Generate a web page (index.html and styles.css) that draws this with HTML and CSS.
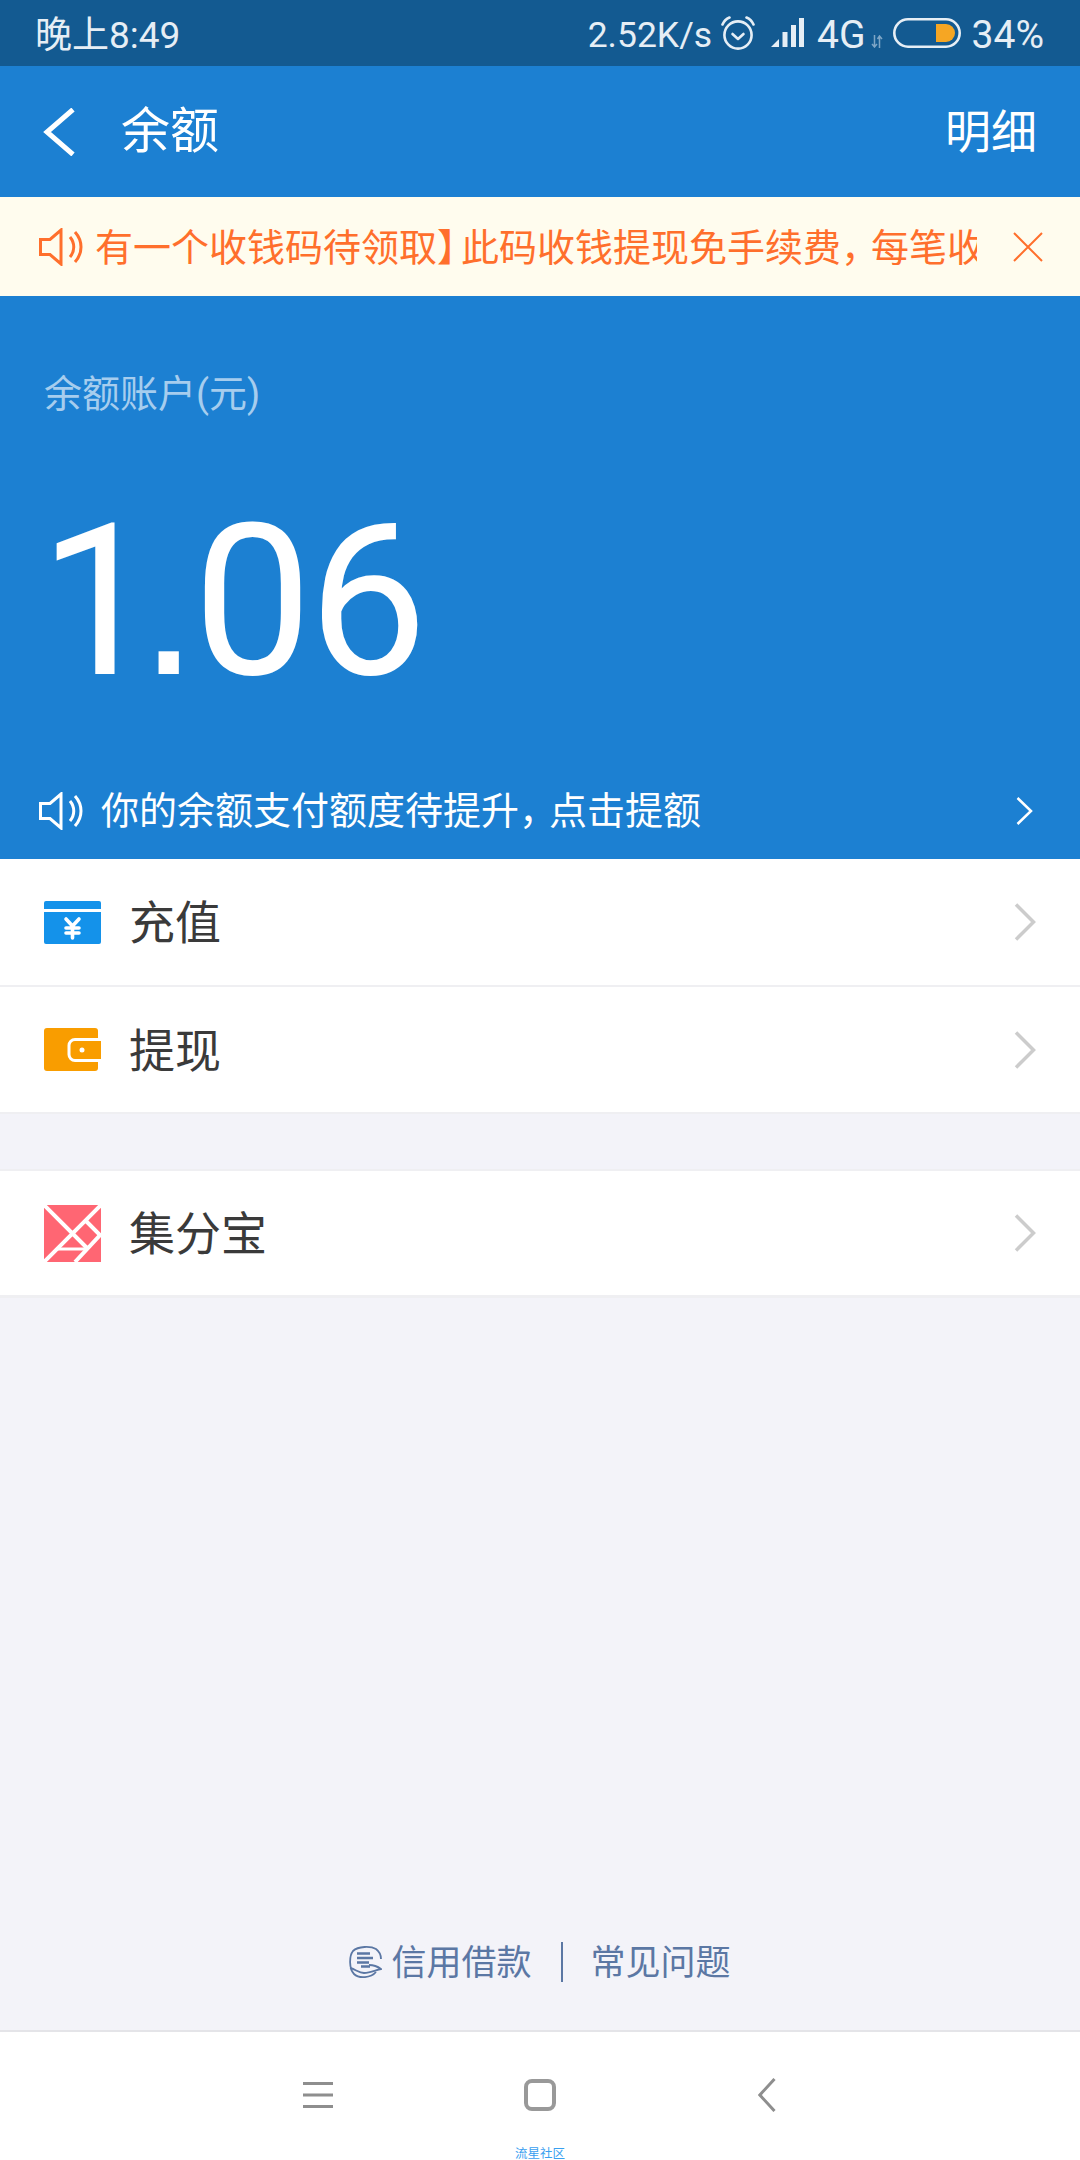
FILE: index.html
```html
<!DOCTYPE html>
<html lang="zh-CN">

<head>
    <meta charset="UTF-8">
    <meta name="viewport" content="width=device-width, initial-scale=1.0">
    <title>余额</title>
    <link rel="stylesheet" href="styles.css">
</head>

<body>
    <div class="page">

        <!-- status bar -->
        <div class="status">
            <span class="status-time">晚上8:49</span>
            <div class="status-right">
                <span class="speed">2.52K/s</span>
                <svg class="alarm" width="34" height="34" viewBox="0 0 34 34" fill="none" stroke="#e6eef5" stroke-width="2.6" stroke-linecap="round" stroke-linejoin="round">
                    <circle cx="17" cy="19" r="13.6" />
                    <path d="M11.5 18l5.5 5 5.500-5" />
                    <path d="M1.500 8.500C3 5 5 3 8.500 1.500" />
                    <path d="M32.500 8.500C31 5 29 3 25.500 1.500" />
                </svg>
                <svg class="signal" width="33" height="30" viewBox="0 0 33 30" fill="#e6eef5">
                    <path d="M0 29L8 21V29Z" />
                    <rect x="11.500" y="14" width="5" height="15" />
                    <rect x="20" y="7" width="5" height="22" />
                    <rect x="28" y="0" width="5" height="29" />
                </svg>
                <span class="net">4G</span>
                <svg class="arrows" width="12" height="13" viewBox="0 0 12 13" fill="none" stroke="#7fa6c6" stroke-width="1.500">
                    <path d="M3.500 0V12M1 9l2.500 3 2.500-3" />
                    <path d="M8.500 13V1M6.500 4l2-3 2.500 3" />
                </svg>
                <svg class="battery" width="68" height="30" viewBox="0 0 68 30">
                    <rect x="1.300" y="1.300" width="65.400" height="27.400" rx="13.700" fill="none" stroke="#e6eef5" stroke-width="2.600" />
                    <path d="M43 6H53A9 9 0 0 1 53 24H43Z" fill="#f6a623" />
                </svg>
                <span class="percent">34%</span>
            </div>
        </div>

        <!-- title bar -->
        <div class="nav">
            <svg class="nav-back" width="32" height="48" viewBox="0 0 32 48" fill="none" stroke="#fff" stroke-width="5">
                <path d="M30 1.500L4 24L30 46.500" />
            </svg>
            <span class="nav-title">余额</span>
            <span class="nav-link">明细</span>
        </div>

        <!-- notice -->
        <div class="notice">
            <svg class="horn" width="44" height="38" viewBox="0 0 44 38" fill="none" stroke="#ff6f2c" stroke-width="3">
                <path d="M1.500 11.500H11L22 2V36L11 26.500H1.500Z" />
                <path d="M31 9C36 15 36 23 31 29" />
                <path d="M36 4C44 13 44 25 36 34" />
            </svg>
            <div class="notice-text">有一个收钱码待领取<span class="bracket">】</span>此码收钱提现免手续费<span class="comma">，</span>每笔收</div>
            <svg class="notice-close" width="30" height="30" viewBox="0 0 30 30" fill="none" stroke="#ff6f2c" stroke-width="2">
                <path d="M1 1L29 29M29 1L1 29" />
            </svg>
        </div>

        <!-- balance -->
        <div class="hero">
            <div class="hero-label">余额账户(元)</div>
            <div class="hero-amount"><span class="hero-one">1</span><span class="hero-dot">.</span>06</div>
            <div class="hero-tip">
                <svg class="horn" width="44" height="38" viewBox="0 0 44 38" fill="none" stroke="#fff" stroke-width="3">
                    <path d="M1.500 11.500H11L22 2V36L11 26.500H1.500Z" />
                    <path d="M31 9C36 15 36 23 31 29" />
                    <path d="M36 4C44 13 44 25 36 34" />
                </svg>
                <span class="hero-tip-text">你的余额支付额度待提升<span class="comma">，</span>点击提额</span>
                <svg class="hero-arrow" width="17" height="28" viewBox="0 0 17 28" fill="none" stroke="#fff" stroke-width="2.500">
                    <path d="M1.500 1L15 14L1.500 27" />
                </svg>
            </div>
        </div>

        <!-- rows -->
        <div class="group">
            <div class="row">
                <svg class="row-icon" width="57" height="43" viewBox="0 0 57 43">
                    <path d="M2 0H55A2 2 0 0 1 57 2V8H0V2A2 2 0 0 1 2 0Z" fill="#1492ea" />
                    <path d="M0 11H57V41A2 2 0 0 1 55 43H2A2 2 0 0 1 0 41Z" fill="#1492ea" />
                    <path d="M22 18L28.500 25L35 18M22 27H35M22 32H35M28.500 25V37" fill="none" stroke="#fff" stroke-width="3.600" stroke-linecap="round" />
                </svg>
                <span class="row-label">充值</span>
                <svg class="row-arrow" width="22" height="38" viewBox="0 0 22 38" fill="none" stroke="#ccc" stroke-width="3.500">
                    <path d="M2 1.500L19.500 19L2 36.500" />
                </svg>
            </div>
            <div class="row row-last">
                <svg class="row-icon" width="57" height="43" viewBox="0 0 57 43">
                    <rect width="54" height="43" rx="3" fill="#f99d00" />
                    <path d="M57 11.500H31A6 6 0 0 0 25 17.500V26.500A6 6 0 0 0 31 32.500H57Z" fill="#f99d00" stroke="#fff" stroke-width="3" />
                    <path d="M54 13H57V31H54Z" fill="#f99d00" />
                    <circle cx="38" cy="22" r="2.500" fill="#fff" />
                </svg>
                <span class="row-label">提现</span>
                <svg class="row-arrow" width="22" height="38" viewBox="0 0 22 38" fill="none" stroke="#ccc" stroke-width="3.500">
                    <path d="M2 1.500L19.500 19L2 36.500" />
                </svg>
            </div>
        </div>

        <div class="group group-second">
            <div class="row row-last">
                <svg class="row-icon" width="57" height="57" viewBox="0 0 57 57">
                    <rect width="57" height="57" fill="#ff6673" />
                    <path d="M0 0L44 44M57 0L0 57M57 29L31 57M42 16L57 31" fill="none" stroke="#fff" stroke-width="4" />
                    <path d="M13 44H44" fill="none" stroke="#fff" stroke-width="3" />
                </svg>
                <span class="row-label">集分宝</span>
                <svg class="row-arrow" width="22" height="38" viewBox="0 0 22 38" fill="none" stroke="#ccc" stroke-width="3.500">
                    <path d="M2 1.500L19.500 19L2 36.500" />
                </svg>
            </div>
        </div>

        <!-- links at the bottom of the page -->
        <div class="links">
            <svg class="credit" width="33" height="33" viewBox="0 0 33 33" fill="none" stroke="#5b77a4" stroke-width="1.800">
                <path d="M27 26C22 32 10 33 5 28C0 23 0 10 4 5C9 0 22 0 27 3C31 6 32 9 32 13" />
                <path d="M8 7.500H21M8 12H24M8 16.500H20M12 20.500H21" stroke-width="2.400" />
                <path d="M1 22C6 23 10 27 15 27C21 27 27 24 32 23C28 20 25 19 20 19" />
            </svg>
            <span class="link-text">信用借款</span>
            <span class="link-sep"></span>
            <span class="link-text link-text-second">常见问题</span>
        </div>

        <!-- system navigation -->
        <div class="sysbar">
            <svg class="sys-menu" width="30" height="26" viewBox="0 0 30 26" fill="#8e8e8e">
                <rect y="0" width="30" height="3" />
                <rect y="11.500" width="30" height="3" />
                <rect y="23" width="30" height="3" />
            </svg>
            <span class="sys-home"></span>
            <svg class="sys-back" width="18" height="34" viewBox="0 0 18 34" fill="none" stroke="#8e8e8e" stroke-width="3">
                <path d="M16.500 1L1.800 17L16.500 33" />
            </svg>
            <span class="watermark">流星社区</span>
        </div>

    </div>
</body>

</html>
```

FILE: styles.css
```css
* {
    box-sizing: border-box;
}

body {
    margin: 0;
    font-family: Roboto, "Noto Sans CJK SC", sans-serif;
    background-color: #f3f3f9;
}

.page {
    width: 1080px;
    height: 2160px;
    display: flex;
    flex-direction: column;
    overflow: hidden;
}

svg {
    display: block;
    flex-shrink: 0;
}

/* status bar */
.status {
    height: 66px;
    padding: 0 36px 0 35px;
    display: flex;
    align-items: center;
    justify-content: space-between;
    background-color: #135a91;
    color: #e6eef5;
    font-size: 35.500px;
}

.status-time {
    margin-bottom: 2px;
    font-size: 37px;
}

.status-right {
    display: flex;
    align-items: center;
}

.speed {
    margin-right: 9px;
    padding-top: 3px;
}

.signal {
    margin-left: 16px;
}

.net {
    margin-left: 13px;
    padding-top: 3px;
    font-size: 39px;
}

.arrows {
    margin: 16px 0 0 5px;
}

.battery {
    margin: 0 0 0 10px;
}

.percent {
    margin-left: 11px;
    padding-top: 3px;
    font-size: 39px;
}

/* title bar */
.nav {
    height: 131px;
    padding: 0 43px;
    display: flex;
    align-items: center;
    background-color: #1c80d2;
    color: #fff;
}

.nav-title {
    margin-left: 46px;
    margin-bottom: 10px;
    font-size: 49px;
}

.nav-link {
    margin-left: auto;
    margin-bottom: 8px;
    font-size: 46px;
}

/* notice */
.notice {
    height: 99px;
    padding: 0 37px 0 39px;
    display: flex;
    align-items: center;
    background-color: #fffcee;
    color: #ff6f2c;
}

.notice-text {
    width: 884px;
    margin-left: 12px;
    margin-bottom: 4px;
    overflow: hidden;
    white-space: nowrap;
    font-size: 38px;
}

.bracket {
    letter-spacing: -14px;
}

.comma {
    letter-spacing: -8px;
}

.notice-close {
    margin-left: 36px;
}

/* balance */
.hero {
    height: 563px;
    padding: 0 0 0 39px;
    background-color: #1c80d2;
    color: #fff;
}

.hero-label {
    margin: 71px 0 0 5px;
    font-size: 38px;
    line-height: 54px;
    color: #a6cdee;
}

.hero-amount {
    margin: 55px 0 0 0;
    font-size: 212px;
    line-height: 250px;
    letter-spacing: -4px;
}

.hero-one {
    letter-spacing: -19px;
}

.hero-dot {
    font-family: "Liberation Sans", sans-serif;
    letter-spacing: -5px;
}

.hero-tip {
    margin-top: 53px;
    display: flex;
    align-items: center;
}

.hero-tip-text {
    margin-left: 18px;
    margin-bottom: 6px;
    font-size: 38px;
}

.hero-arrow {
    margin-left: auto;
    margin-right: 47px;
}

/* rows */
.group {
    background-color: #fff;
    border-bottom: 2px solid #efeff2;
}

.group-second {
    margin-top: 55px;
    border-top: 2px solid #efeff2;
    border-bottom: 3px solid #efeff2;
}

.row {
    height: 128px;
    padding: 0 44px;
    display: flex;
    align-items: center;
    border-bottom: 2px solid #efeff2;
}

.row-last {
    height: 125px;
    border-bottom: none;
}

.group-second .row-last {
    height: 124px;
}

.row-label {
    margin-left: 28px;
    margin-bottom: 6px;
    font-size: 46px;
    color: #3a3a3a;
}

.row-arrow {
    margin-left: auto;
}

/* links */
.links {
    margin-top: auto;
    height: 112px;
    padding-bottom: 24px;
    display: flex;
    align-items: center;
    justify-content: center;
    color: #5b77a4;
    font-size: 35px;
}

.link-text {
    margin-left: 9px;
    margin-bottom: 6px;
}

.link-text-second {
    margin-left: 0;
}

.link-sep {
    width: 2px;
    height: 40px;
    margin: 0 28px 0 29px;
    background-color: #5b77a4;
}

/* system navigation */
.sysbar {
    position: relative;
    height: 130px;
    padding: 0 0 2px 303px;
    display: flex;
    align-items: center;
    background-color: #fff;
    border-top: 2px solid #e4e4e8;
}

.sys-home {
    width: 32px;
    height: 32px;
    margin-left: 191px;
    border: 4px solid #999;
    border-radius: 8px;
}

.sys-back {
    margin-left: 202px;
}

.watermark {
    position: absolute;
    left: 515px;
    top: 116px;
    font-size: 12.500px;
    line-height: 12px;
    color: #39a0f0;
    white-space: nowrap;
}
```
